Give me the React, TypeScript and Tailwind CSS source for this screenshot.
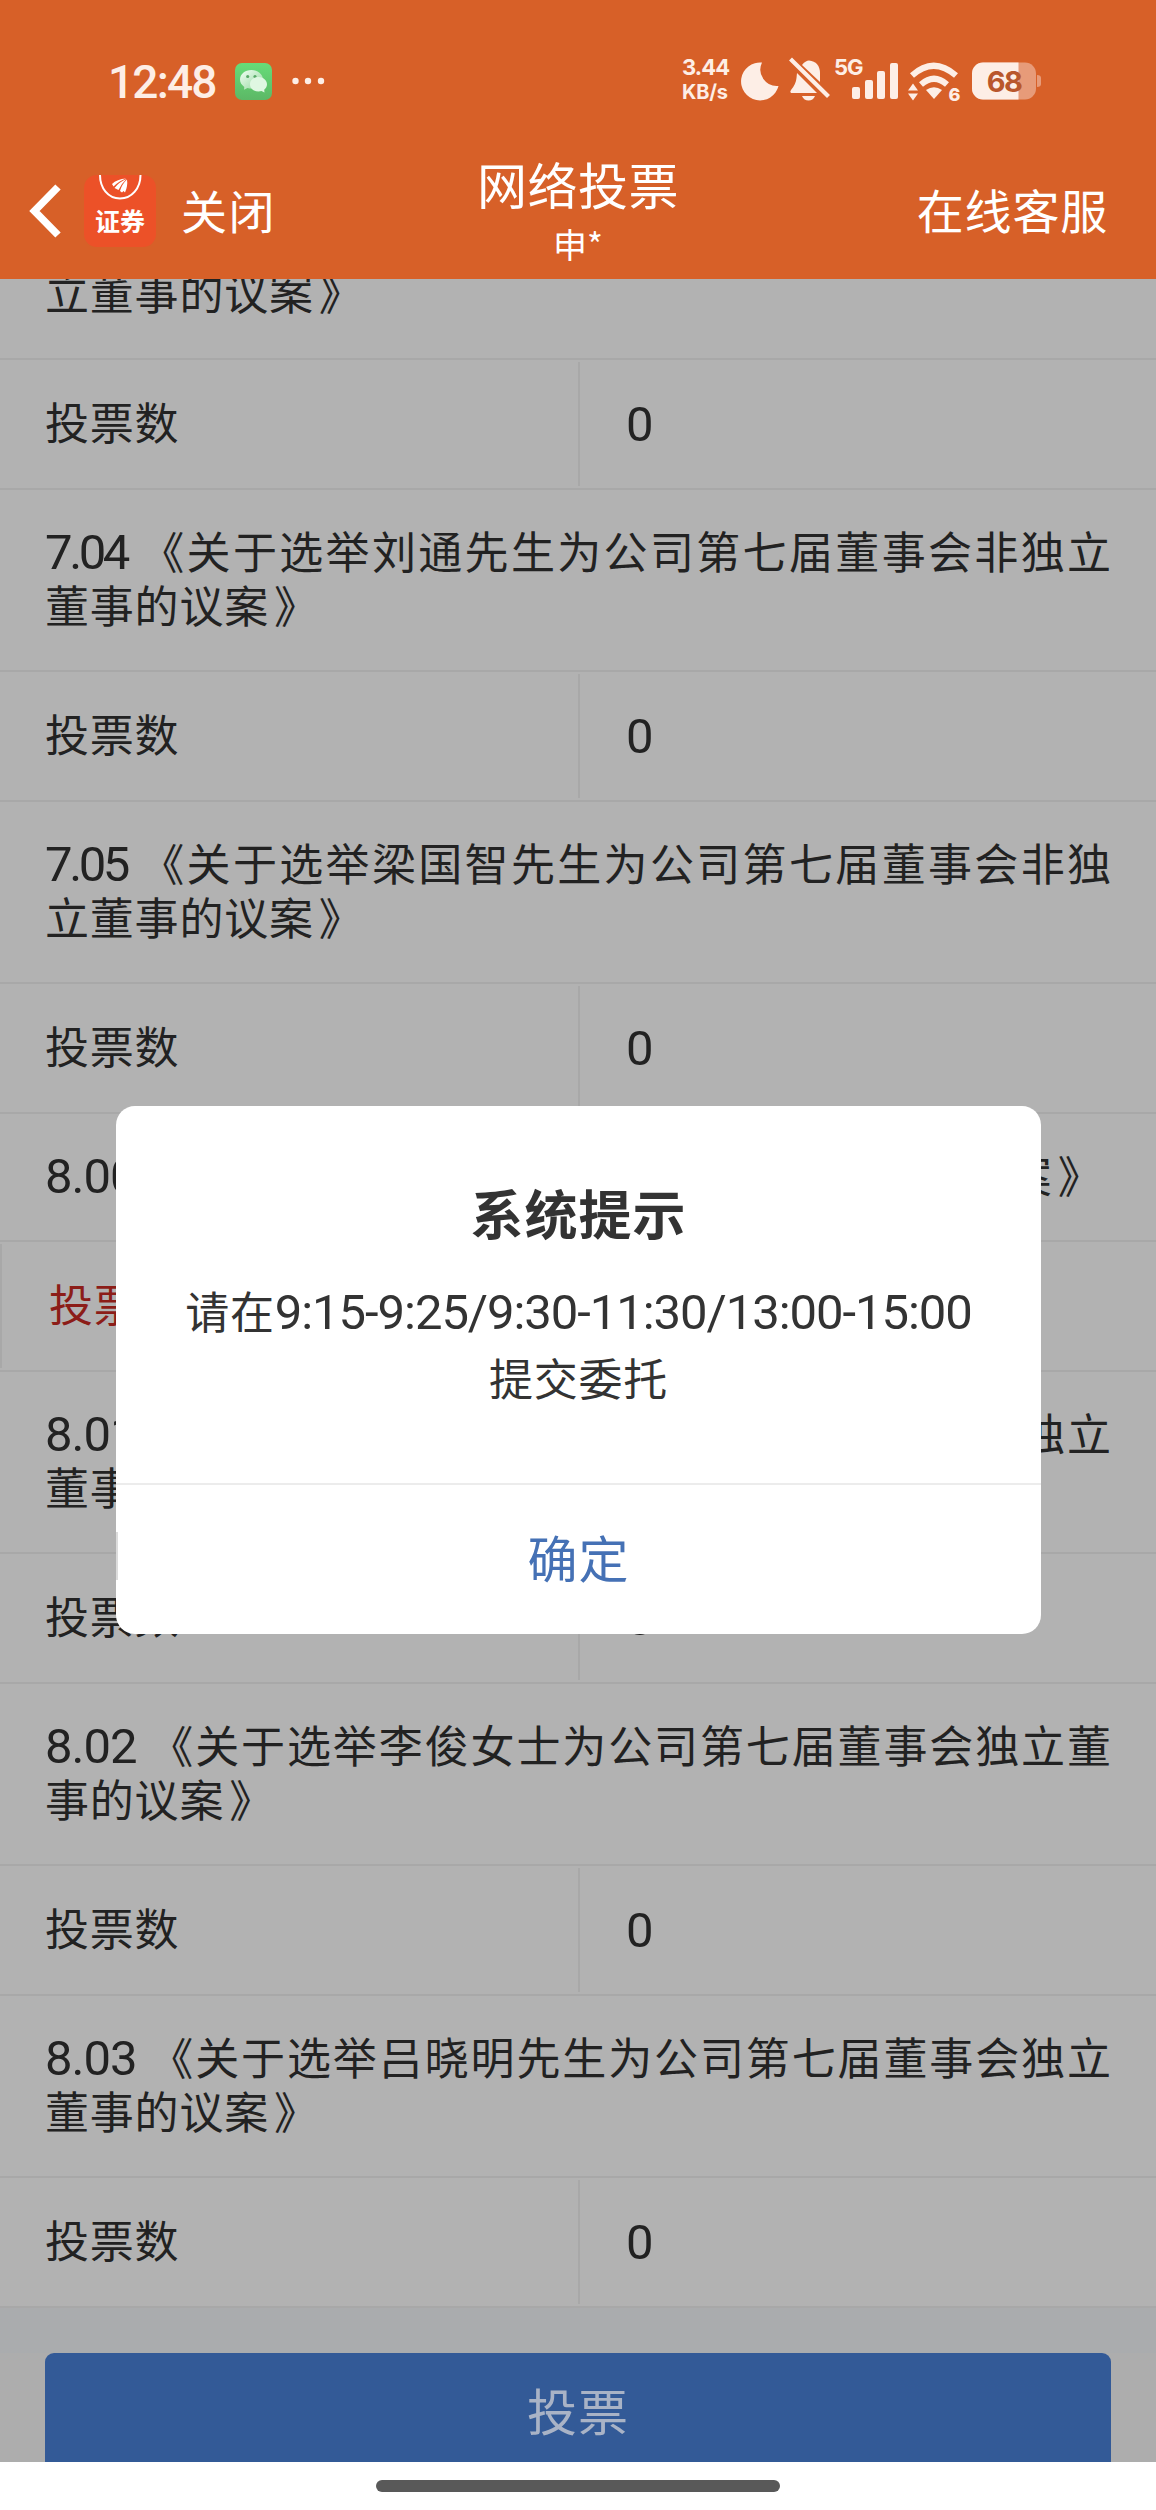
import React from "react";

const cjk = "font-['Roboto','Noto_Sans_CJK_SC',sans-serif]";
const han = "font-['Noto_Sans_CJK_SC',sans-serif]";

function Num({ children, tight = "tracking-[-1px]" }: { children: React.ReactNode; tight?: string }) {
  return <span className={`font-['Roboto',sans-serif] text-[49px] leading-none ${tight}`}>{children}</span>;
}

function Closing({ children }: { children: string }) {
  return (
    <>
      {children}
      <span className="ml-[5px]">》</span>
    </>
  );
}

function VoteRow({ h, value = true, red = false }: { h: string; value?: boolean; red?: boolean }) {
  return (
    <div className={`flex ${h} items-stretch border-b-2 border-[#a8a8a8] py-[2px]`}>
      <div className={`flex w-[580px] items-center ${red ? "border-l-2 border-[#a8a8a8] pl-[47px] text-[#8c1d18]" : "border-r-2 border-[#a8a8a8] pl-[45px]"}`}>
        <span className="relative top-[1px] tracking-[0.8px]">投票数</span>
      </div>
      {value && (
        <div className="flex items-center pl-[46px]">
          <Num>0</Num>
        </div>
      )}
    </div>
  );
}

function TitleRow({ h, no, first, second, tail }: { h: string; no: string; first: string; second: string; tail?: string }) {
  const tight = no.startsWith("7") ? "tracking-[-3.4px]" : "tracking-[-1px]";
  return (
    <div className={`${h} border-b-2 border-[#a8a8a8] px-[45px] pt-[37px] leading-[54px]`}>
      {tail ? (
        <div className="flex h-[54px] justify-between tracking-[2px]">
          <span>
            <Num>{no}</Num> {first}
          </span>
          <span className="mr-[-2px]">{tail}</span>
        </div>
      ) : (
        <div className="h-[54px] whitespace-nowrap [text-align-last:justify]">
          <Num tight={tight}>{no}</Num> {first}
        </div>
      )}
      <div className="h-[54px] tracking-[0.8px]">
        <Closing>{second}</Closing>
      </div>
    </div>
  );
}

function StatusBar() {
  return (
    <div className="flex h-[160px] items-start text-[#fdeee6]">
      <div className="ml-[108px] mt-[55px] w-[127px] font-['Roboto',sans-serif] text-[46px] leading-[54px] font-medium tracking-[-1.8px]">12:48</div>
      <svg className="mt-[63px]" width="90" height="37" viewBox="0 0 90 37">
        <defs>
          <linearGradient id="wg" x1="0" y1="0" x2="0" y2="1">
            <stop offset="0" stopColor="#66dc78" />
            <stop offset="1" stopColor="#5cb866" />
          </linearGradient>
          <linearGradient id="wb" x1="0" y1="0" x2="1" y2="1">
            <stop offset="0" stopColor="#f2fff4" />
            <stop offset="1" stopColor="#8fd69a" />
          </linearGradient>
        </defs>
        <rect width="37" height="37" rx="7" fill="url(#wg)" />
        <path d="M16.5 7C10 7 5 11.2 5 16.6c0 3 1.7 5.6 4.300 7.300L9 26.800l3.500-1.800c1.200.4 2.600.6 4 .6 6.500 0 11.500-4 11.500-9S23 7 16.500 7Z" fill="url(#wb)" />
        <circle cx="12.700" cy="13.500" r="1.600" fill="#58a866" />
        <circle cx="20" cy="13.500" r="1.600" fill="#58a866" />
        <path d="M23.500 14c4.800 0 8.500 3.300 8.500 7.300 0 2.300-1 4-2.800 5.400l.3 2.900-3-1.500c-1 .3-2 .5-3 .5-4.800 0-8.500-3.200-8.500-7.300s3.700-7.300 8.500-7.300Z" fill="#dff7e2" />
        <circle cx="60.500" cy="18" r="3.200" fill="#fdeee6" />
        <circle cx="73" cy="18" r="3.200" fill="#fdeee6" />
        <circle cx="86" cy="18" r="3.200" fill="#fdeee6" />
      </svg>
      <div className="ml-[357px] mt-[55px] w-[56px] font-['Inter',sans-serif] font-bold">
        <div className="text-[22px] leading-[25px] tracking-[-0.9px]">3.44</div>
        <div className="text-[20px] leading-[24px] tracking-[-0.2px]">KB/s</div>
      </div>
      <svg className="mt-[55px]" width="306" height="52" viewBox="738 55 306 52" fill="#fdeee6">
        <path d="M762 62.500A19 19 0 1 0 778.500 86A16.500 16.500 0 0 1 762 62.500Z" />
        <path d="M802 65C804 62 807 60.500 809 60.500C816 61 820 66 820 73V82Z" />
        <path d="M797 73L817 93H791Q789.500 92 791 90Q796 84 796.500 78Z" />
        <path d="M802 96h13q-2 4.500-6.500 4.500T802 96Z" />
        <path d="M792 60.500L827 95" stroke="#fdeee6" strokeWidth="4.200" strokeLinecap="square" fill="none" />
        <text x="834" y="75" fontFamily="Inter, sans-serif" fontSize="22" fontWeight="700" letterSpacing="-1">5G</text>
        <rect x="852" y="87" width="8" height="12" rx="2" />
        <rect x="865" y="80" width="8" height="19" rx="2" />
        <rect x="877" y="71" width="8" height="28" rx="2" />
        <rect x="890" y="63" width="8" height="36" rx="2" />
        <path d="M912 75.500Q933.500 56 956 75.500" fill="none" stroke="#fdeee6" strokeWidth="6" />
        <path d="M921 84.500Q934 73 947 84.500" fill="none" stroke="#fdeee6" strokeWidth="6" />
        <path d="M926 90Q934 84.500 942 90L934 99Z" />
        <path d="M908 90.500l5-7 5 7ZM908 93.500l5 7 5-7Z" />
        <text x="948.500" y="100.500" fontFamily="Inter, sans-serif" fontSize="18" fontWeight="800">6</text>
        <rect x="972" y="62.500" width="64" height="37" rx="11" fill="#e79b79" />
        <path d="M983 62.500H1018.500V99.500H983A11 11 0 0 1 972 88.500V73.500A11 11 0 0 1 983 62.500Z" />
        <path d="M1037 75q4 0 4 3v6q0 3-4 3Z" fill="#e79b79" />
        <text x="1004" y="91.500" textAnchor="middle" fontFamily="Inter, sans-serif" fontSize="29" fontWeight="700" letterSpacing="-1.500" fill="#b9572c">68</text>
      </svg>
    </div>
  );
}

function NavBar() {
  return (
    <div className="grid h-[118px] grid-cols-3 text-white">
      <div className="flex items-start pl-[28px]">
        <svg className="mt-[22px]" width="36" height="58" viewBox="0 0 36 58">
          <path d="M30 5L6.500 29L30 53" fill="none" stroke="#fff" strokeWidth="7.500" strokeLinecap="butt" strokeLinejoin="miter" />
        </svg>
        <div className="relative ml-[20px] mt-[15px] h-[72px] w-[72px] rounded-[13px] bg-[#ec5128]">
          <svg className="absolute inset-0" width="72" height="72" viewBox="0 0 72 72">
            <path d="M16 0C16 13 24 23.500 36 23.500S56.500 13 56.500 0" fill="none" stroke="#fff" strokeWidth="2" />
            <path d="M28 9Q33 4 42 3.500Q35 6 29.500 11.500Z" fill="#fff" />
            <path d="M30.500 13Q35 7 42.500 4Q37 9 34.500 15Z" fill="#fff" />
            <path d="M36 16Q38 9 43 4.500Q44 11 41 17.500L39.500 16L38 17.500Z" fill="#fff" />
          </svg>
          <div className="absolute left-0 top-[30px] w-[72px] text-center font-['Noto_Sans_CJK_SC',sans-serif] text-[25px] leading-[30px] font-bold">证券</div>
        </div>
        <div className={`${han} ml-[25px] mt-[19px] text-[46px] leading-[60px] tracking-[1.500px]`}>关闭</div>
      </div>
      <div className={`${han} flex flex-col items-center`}>
        <div className="mt-[-9px] text-[50px] leading-[64px] tracking-[0.500px]">网络投票</div>
        <div className="mt-[5px] text-[34px] leading-[48px]">申*</div>
      </div>
      <div className={`${han} pr-[48px] pt-[19px] text-right text-[47px] leading-[60px] tracking-[0.800px]`}>在线客服</div>
    </div>
  );
}

export default function App() {
  return (
    <div lang="zh-CN" className={`relative h-[2510px] w-[1156px] overflow-hidden bg-white ${cjk}`}>
      <header className="h-[279px] bg-[#d76028]">
        <StatusBar />
        <NavBar />
      </header>

      <main className="h-[2183px] overflow-hidden bg-[#adadad] text-[44px] text-[#222]">
        <div className="bg-[#b2b2b2]">
          <div className="h-[81px] border-b-2 border-[#a8a8a8] px-[45px] leading-[54px]">
            <div className="translate-y-[-11px] tracking-[0.8px]">
              <Closing>立董事的议案</Closing>
            </div>
          </div>
          <VoteRow h="h-[130px]" />
          <TitleRow h="h-[182px]" no="7.04" first="《关于选举刘通先生为公司第七届董事会非独立" second="董事的议案" />
          <VoteRow h="h-[130px]" />
          <TitleRow h="h-[182px]" no="7.05" first="《关于选举梁国智先生为公司第七届董事会非独" second="立董事的议案" />
          <VoteRow h="h-[130px]" />
          <div className="h-[128px] whitespace-nowrap border-b-2 border-[#a8a8a8] px-[45px] pt-[37px] leading-[54px] tracking-[1.2px]">
            <Num>8.00</Num> <Closing>《关于选举公司第七届董事会独立董事的议案</Closing>
          </div>
          <VoteRow h="h-[130px]" value={false} red />
          <TitleRow h="h-[182px]" no="8.01" first="《关于选举" tail="为公司第七届董事会独立" second="董事的议案" />
          <VoteRow h="h-[130px]" />
          <TitleRow h="h-[182px]" no="8.02" first="《关于选举李俊女士为公司第七届董事会独立董" second="事的议案" />
          <VoteRow h="h-[130px]" />
          <TitleRow h="h-[182px]" no="8.03" first="《关于选举吕晓明先生为公司第七届董事会独立" second="董事的议案" />
          <VoteRow h="h-[130px]" />
        </div>
        <div className="h-[45px] bg-[#aaacae]" />
        <div className="px-[45px]">
          <button className={`${han} block h-[130px] w-full rounded-[9px] bg-[#335a97] pb-[18px] text-[50px] leading-[112px] tracking-[1px] text-[#a9b3c6]`}>投票</button>
        </div>
      </main>

      <footer className="flex h-[48px] justify-center bg-white pt-[18px]">
        <div className="h-[12px] w-[404px] rounded-full bg-[#595959]" />
      </footer>

      <section className="absolute left-[116px] top-[1106px] flex h-[528px] w-[925px] flex-col overflow-hidden rounded-[19px] bg-white text-[#333]">
        <div className="h-[379px] border-b-2 border-[#ececec] pt-[71px] text-center">
          <h2 className={`${han} text-[53px] leading-[70px] font-bold tracking-[1px]`}>系统提示</h2>
          <div className="pt-[34px] text-[44px] leading-[67px] tracking-[0.8px]">
            <p className="h-[67px] whitespace-nowrap">
              请在<Num tight="tracking-[-1.05px]">9:15-9:25/9:30-11:30/13:00-15:00</Num>
            </p>
            <p className="h-[67px]">提交委托</p>
          </div>
        </div>
        <div className="relative flex flex-1 items-center justify-center">
          <div className="absolute left-0 top-[47px] h-[48px] w-[2px] bg-[#dcdcdc]" />
          <button className={`${han} mt-[-8px] text-[50px] leading-[70px] tracking-[1px] text-[#4571b5]`}>确定</button>
        </div>
      </section>
    </div>
  );
}
